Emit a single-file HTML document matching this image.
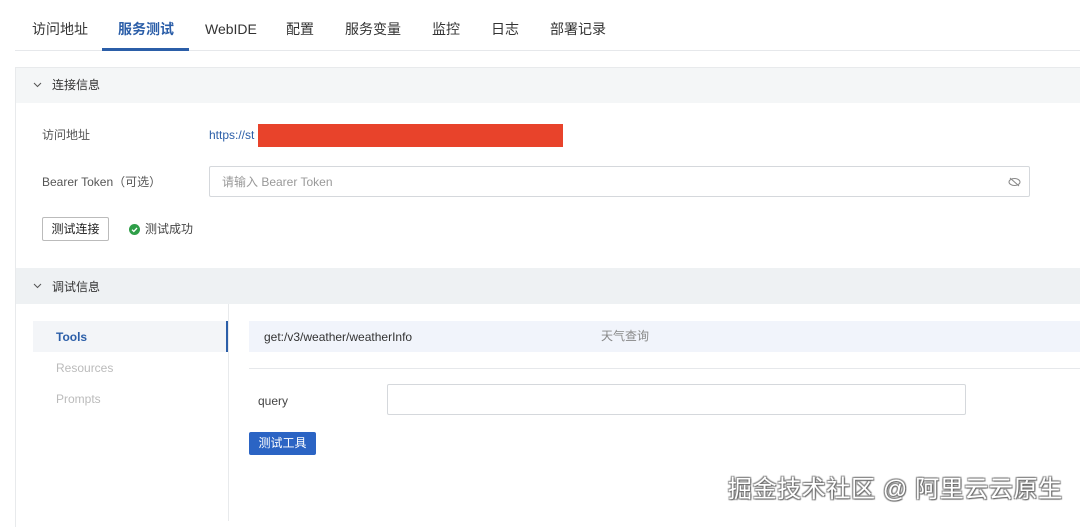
<!DOCTYPE html>
<html><head><meta charset="utf-8"><style>
*{box-sizing:border-box;margin:0;padding:0}
body{width:1080px;height:521px;overflow:hidden;background:#fff;font-family:"Liberation Sans","Noto Sans CJK SC",sans-serif;color:#333;position:relative}
.a{position:absolute;line-height:16px}
.tab{position:absolute;top:20px;font-size:14px;color:#333;line-height:18px}
</style></head><body>
<div class="tab" style="left:32px">访问地址</div>
<div class="tab" style="left:118px;color:#2b5ea8;font-weight:bold">服务测试</div>
<div class="tab" style="left:205px">WebIDE</div>
<div class="tab" style="left:286px">配置</div>
<div class="tab" style="left:345px">服务变量</div>
<div class="tab" style="left:432px">监控</div>
<div class="tab" style="left:491px">日志</div>
<div class="tab" style="left:550px">部署记录</div>
<div class="a" style="left:15px;top:50px;width:1065px;height:1px;background:#e6e8eb"></div>
<div class="a" style="left:102px;top:48px;width:87px;height:3px;background:#2b5ea8"></div>

<div class="a" style="left:15px;top:67px;width:1065px;height:460px;border-left:1px solid #e8eaec;border-top:1px solid #e8eaec;background:#fff"></div>
<div class="a" style="left:16px;top:68px;width:1064px;height:35px;background:#f4f6f7"></div>
<svg class="a" style="left:33px;top:81px" width="9" height="7" viewBox="0 0 9 7"><path d="M1 2l3.5 3.5L8 2" fill="none" stroke="#555" stroke-width="1"/></svg>
<div class="a" style="left:52px;top:77px;font-size:12px;color:#333">连接信息</div>

<div class="a" style="left:42px;top:127px;font-size:12px;color:#555">访问地址</div>
<div class="a" style="left:209px;top:127px;font-size:12px;color:#2b5ea8">https://st</div>
<div class="a" style="left:258px;top:124px;width:305px;height:23px;background:#e8432b"></div>

<div class="a" style="left:42px;top:174px;font-size:12px;color:#555">Bearer Token（可选）</div>
<div class="a" style="left:209px;top:166px;width:821px;height:31px;border:1px solid #d5d8dc;border-radius:2px"></div>
<div class="a" style="left:222px;top:174px;font-size:12px;color:#999">请输入 Bearer Token</div>
<svg class="a" style="left:1008px;top:177px" width="13" height="10" viewBox="0 0 13 10"><ellipse cx="6.5" cy="5" rx="5.5" ry="3.5" fill="none" stroke="#888" stroke-width="1"/><path d="M2 1l9 8" stroke="#888" stroke-width="1"/></svg>

<div class="a" style="left:42px;top:217px;width:67px;height:24px;border:1px solid #bbb;border-radius:2px;font-size:12px;color:#222;text-align:center;line-height:22px">测试连接</div>
<svg class="a" style="left:129px;top:224px" width="11" height="11" viewBox="0 0 11 11"><circle cx="5.5" cy="5.5" r="5.5" fill="#2e9e48"/><path d="M3 5.7l1.8 1.7L8 4" fill="none" stroke="#fff" stroke-width="1.3"/></svg>
<div class="a" style="left:145px;top:221px;font-size:12px;color:#444">测试成功</div>

<div class="a" style="left:16px;top:268px;width:1064px;height:36px;background:#eef1f3"></div>
<svg class="a" style="left:33px;top:282px" width="9" height="7" viewBox="0 0 9 7"><path d="M1 2l3.5 3.5L8 2" fill="none" stroke="#555" stroke-width="1"/></svg>
<div class="a" style="left:52px;top:279px;font-size:12px;color:#333">调试信息</div>

<div class="a" style="left:33px;top:321px;width:195px;height:31px;background:#f3f5f8"></div>
<div class="a" style="left:226px;top:321px;width:2px;height:31px;background:#2b5ea8"></div>
<div class="a" style="left:228px;top:304px;width:1px;height:217px;background:#e8eaec"></div>
<div class="a" style="left:56px;top:329px;font-size:12px;color:#2b5ea8;font-weight:bold">Tools</div>
<div class="a" style="left:56px;top:360px;font-size:12px;color:#bbb">Resources</div>
<div class="a" style="left:56px;top:391px;font-size:12px;color:#bbb">Prompts</div>

<div class="a" style="left:249px;top:321px;width:831px;height:31px;background:#f1f4fb"></div>
<div class="a" style="left:264px;top:329px;font-size:12px;color:#333">get:/v3/weather/weatherInfo</div>
<div class="a" style="left:601px;top:328px;font-size:12px;color:#888">天气查询</div>
<div class="a" style="left:249px;top:368px;width:831px;height:1px;background:#e6e8eb"></div>
<div class="a" style="left:258px;top:393px;font-size:12px;color:#444">query</div>
<div class="a" style="left:387px;top:384px;width:579px;height:31px;border:1px solid #d5d8dc;border-radius:2px"></div>
<div class="a" style="left:249px;top:432px;width:67px;height:23px;background:#2b64c4;border-radius:2px;color:#fff;font-size:12px;text-align:center;line-height:23px">测试工具</div>

<div class="a" style="left:728px;top:474px;font-size:24px;line-height:32px;color:#fff;letter-spacing:0.6px;text-shadow:1px 1px 1px #666,-1px -1px 1px #888,1px -1px 1px #888,-1px 1px 1px #888;white-space:nowrap">掘金技术社区 @ 阿里云云原生</div>
</body></html>
